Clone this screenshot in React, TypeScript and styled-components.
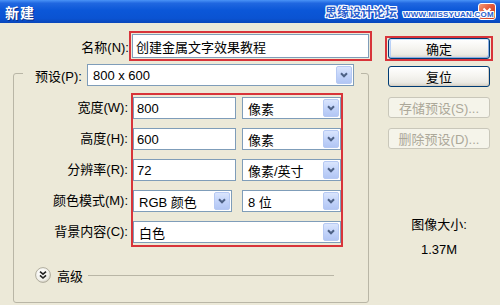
import React from "react";
import styled, { createGlobalStyle } from "styled-components";

const Global = createGlobalStyle`
  html, body { margin: 0; padding: 0; background: #ECE9D8; }
  body {
    font-family: "Liberation Sans", "Noto Sans CJK SC", sans-serif;
    font-size: 13px;
    color: #000;
  }
  * { box-sizing: border-box; }
`;

const Window = styled.div`
  position: relative;
  width: 500px;
  height: 305px;
  overflow: hidden;
  background: #ECE9D8;
  display: flex;
  flex-direction: column;
`;

const TitleBar = styled.div`
  position: relative;
  flex: none;
  height: 23px;
  display: flex;
  align-items: center;
  padding: 0 4px 0 5px;
  background: linear-gradient(180deg, #4A93F7 0%, #2067E0 14%, #0B57D8 45%, #0A53D2 80%, #0946BA 100%);
`;

const Title = styled.span`
  color: #fff;
  font-weight: bold;
  font-size: 14px;
  letter-spacing: 1px;
  text-shadow: 1px 1px 0 #0A2F8A;
`;

const CloseBtn = styled.div`
  margin-left: auto;
  width: 18px;
  height: 17px;
  border: 1px solid #fff;
  border-radius: 3px;
  background: linear-gradient(135deg, #F29A78 0%, #E3593B 45%, #C73B1E 100%);
  display: flex;
  align-items: center;
  justify-content: center;
`;

const Watermark = styled.div`
  position: absolute;
  left: 325px;
  top: 3px;
  display: flex;
  align-items: baseline;
  gap: 6px;
  white-space: nowrap;
  color: #2A5FCF;
  text-shadow: 1px 0 0 #fff, -1px 0 0 #fff, 0 1px 0 #fff, 0 -1px 0 #fff,
    1px 1px 0 #fff, -1px -1px 0 #fff, 1px -1px 0 #fff, -1px 1px 0 #fff;
`;

const WmCn = styled.span`
  font-size: 12px;
  font-weight: bold;
`;

const WmEn = styled.span`
  font-family: "Liberation Sans", sans-serif;
  font-size: 8px;
  font-weight: bold;
  letter-spacing: 0.2px;
`;

const Body = styled.div`
  flex: 1;
  display: flex;
`;

const Main = styled.div`
  width: 375px;
  flex: none;
  display: flex;
  flex-direction: column;
  padding-top: 8px;
`;

const NameRow = styled.div`
  display: flex;
  align-items: center;
`;

const Label = styled.label<{ $w?: number }>`
  ${(p) => (p.$w ? `width: ${p.$w}px;` : "")}
  text-align: right;
  white-space: nowrap;
  font-size: 13px;
`;

const RedFrame = styled.div`
  border: 2px solid #D8343A;
  padding: 1px;
`;

const TextField = styled.input<{ $w: number; $h?: number }>`
  display: block;
  width: ${(p) => p.$w}px;
  height: ${(p) => p.$h ?? 22}px;
  margin: 0;
  border: 1px solid #7F9DB9;
  background: #fff;
  padding: 0 3px;
  font: inherit;
  font-size: 13px;
  color: #000;
  outline: none;
`;

const Group = styled.fieldset`
  margin: 0 0 0 13px;
  padding: 7px 0 19px 0;
  width: 356px;
  min-inline-size: auto;
  border: 1px solid #B9B6A6;
  border-radius: 3px;
`;

const Legend = styled.legend`
  margin-left: 9px;
  padding: 3px 7px 0 12px;
`;

const LegendRow = styled.div`
  display: flex;
  align-items: center;
  gap: 5px;
`;

const Select = styled.div<{ $w: number }>`
  width: ${(p) => p.$w}px;
  height: 22px;
  border: 1px solid #7F9DB9;
  background: #fff;
  display: flex;
  align-items: center;
  padding: 0 1px 0 5px;
  font-size: 13px;
  white-space: nowrap;
`;

const SelText = styled.span`
  flex: 1;
`;

const DropBtn = styled.span`
  width: 16px;
  height: 18px;
  border: 1px solid #B6C9F3;
  border-radius: 2px;
  background: linear-gradient(180deg, #DAE5FD 0%, #C3D4FA 50%, #B2C6F4 100%);
  display: flex;
  align-items: center;
  justify-content: center;
`;

const Form = styled.div`
  display: flex;
  gap: 3px;
`;

const LabelCol = styled.div`
  width: 114px;
  padding-top: 4px;
  display: flex;
  flex-direction: column;
  align-items: flex-end;
  gap: 9px;
  & > label {
    height: 22px;
    line-height: 22px;
  }
`;

const FieldCol = styled.div`
  border: 2px solid #D8343A;
  padding: 2px 0 2px 0;
  display: flex;
  flex-direction: column;
  gap: 9px;
`;

const Pair = styled.div<{ $gap: number }>`
  display: flex;
  gap: ${(p) => p.$gap}px;
  height: 22px;
`;

const AdvancedRow = styled.div`
  display: flex;
  align-items: center;
  margin: 20px 34px 0 21px;
  height: 16px;
`;

const AdvText = styled.span`
  margin-left: 6px;
  font-size: 13px;
`;

const AdvLine = styled.div`
  flex: 1;
  height: 1px;
  margin-left: 5px;
  background: #B9B6A6;
`;

const Side = styled.div`
  flex: 1;
  display: flex;
  flex-direction: column;
  align-items: flex-start;
  padding: 13px 0 0 13px;
`;

const DefaultFrame = styled.div`
  margin-left: -3px;
  border: 2px solid #D8343A;
  padding: 0 1px;
`;

const Button = styled.button<{ $default?: boolean; $mt?: number }>`
  display: block;
  width: 102px;
  height: 21px;
  margin: ${(p) => p.$mt ?? 0}px 0 0 0;
  padding: 0;
  font: inherit;
  font-size: 13px;
  color: #000;
  border: 1px solid #003C74;
  border-radius: 3px;
  background: linear-gradient(180deg, #FFFFFF 0%, #F6F5F1 45%, #ECEBE5 80%, #D8D3C8 100%);
  box-shadow: ${(p) =>
    p.$default
      ? "inset 1px 1px 0 #CEE3FF, inset -1px -1px 0 #89ADE4, inset 2px 0 0 #B8D0F7"
      : "inset -1px -1px 0 #D6D0C5"};
  &:disabled {
    color: #ACA899;
    border-color: #C9C7BA;
    background: #F5F4EA;
    box-shadow: none;
  }
`;

const Info = styled.div`
  width: 102px;
  margin-top: 68px;
  display: flex;
  flex-direction: column;
  align-items: center;
  gap: 9px;
  font-size: 13px;
  line-height: 16px;
`;

const Chevron = () => (
  <svg width="8" height="6" viewBox="0 0 8 6">
    <path d="M1 1.3 L4 4.3 L7 1.3" stroke="#4D6185" strokeWidth="2" fill="none" />
  </svg>
);

const Drop = ({ text, w }: { text: string; w: number }) => (
  <Select $w={w}>
    <SelText>{text}</SelText>
    <DropBtn>
      <Chevron />
    </DropBtn>
  </Select>
);

const AdvIcon = () => (
  <svg width="16" height="16" viewBox="0 0 16 16">
    <defs>
      <radialGradient id="advg" cx="40%" cy="35%" r="70%">
        <stop offset="0%" stopColor="#FFFFFF" />
        <stop offset="70%" stopColor="#F1F0EA" />
        <stop offset="100%" stopColor="#CFCBBE" />
      </radialGradient>
    </defs>
    <circle cx="8" cy="8" r="7.4" fill="url(#advg)" stroke="#A8A595" strokeWidth="0.9" />
    <path d="M5 4.6 L8 7.2 L11 4.6 M5 8.4 L8 11 L11 8.4" stroke="#222" strokeWidth="1.6" fill="none" />
  </svg>
);

const CloseX = () => (
  <svg width="10" height="10" viewBox="0 0 10 10">
    <path d="M1.5 1.5 L8.5 8.5 M8.5 1.5 L1.5 8.5" stroke="#fff" strokeWidth="2" />
  </svg>
);

export default function App() {
  return (
    <>
      <Global />
      <Window>
        <TitleBar>
          <Title>新建</Title>
          <CloseBtn>
            <CloseX />
          </CloseBtn>
          <Watermark>
            <WmCn>思缘设计论坛</WmCn>
            <WmEn>WWW.MISSYUAN.COM</WmEn>
          </Watermark>
        </TitleBar>
        <Body>
          <Main>
            <NameRow>
              <Label $w={129}>名称(N):</Label>
              <RedFrame>
                <TextField $w={237} $h={24} readOnly value="创建金属文字效果教程" />
              </RedFrame>
            </NameRow>
            <Group>
              <Legend>
                <LegendRow>
                  <Label>预设(P):</Label>
                  <Drop text="800 x 600" w={267} />
                </LegendRow>
              </Legend>
              <Form>
                <LabelCol>
                  <Label>宽度(W):</Label>
                  <Label>高度(H):</Label>
                  <Label>分辨率(R):</Label>
                  <Label>颜色模式(M):</Label>
                  <Label>背景内容(C):</Label>
                </LabelCol>
                <FieldCol>
                  <Pair $gap={6}>
                    <TextField $w={103} readOnly value="800" />
                    <Drop text="像素" w={99} />
                  </Pair>
                  <Pair $gap={6}>
                    <TextField $w={103} readOnly value="600" />
                    <Drop text="像素" w={99} />
                  </Pair>
                  <Pair $gap={6}>
                    <TextField $w={103} readOnly value="72" />
                    <Drop text="像素/英寸" w={99} />
                  </Pair>
                  <Pair $gap={10}>
                    <Drop text="RGB 颜色" w={99} />
                    <Drop text="8 位" w={99} />
                  </Pair>
                  <Pair $gap={0}>
                    <Drop text="白色" w={208} />
                  </Pair>
                </FieldCol>
              </Form>
              <AdvancedRow>
                <AdvIcon />
                <AdvText>高级</AdvText>
                <AdvLine />
              </AdvancedRow>
            </Group>
          </Main>
          <Side>
            <DefaultFrame>
              <Button $default>确定</Button>
            </DefaultFrame>
            <Button $mt={5}>复位</Button>
            <Button $mt={10} disabled>
              存储预设(S)...
            </Button>
            <Button $mt={10} disabled>
              删除预设(D)...
            </Button>
            <Info>
              <span>图像大小:</span>
              <span>1.37M</span>
            </Info>
          </Side>
        </Body>
      </Window>
    </>
  );
}
